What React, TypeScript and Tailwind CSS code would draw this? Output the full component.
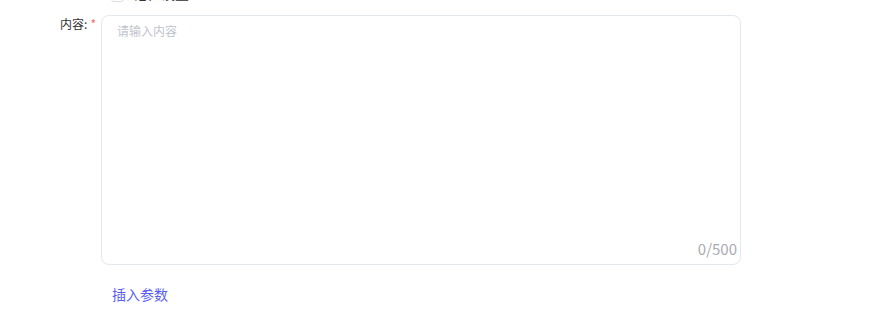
import React from "react";

export default function App() {
  return (
    <div
      className="w-[869px] h-[332px] bg-white overflow-hidden relative"
      style={{ fontFamily: '"Noto Sans CJK SC", "Noto Sans", sans-serif' }}
    >
      <div className="flex items-center h-[20px] mt-[-17px] pl-[111px]">
        <span className="w-[13px] h-[13px] mt-[4px] border border-[#dcdfe6] rounded-[3px] bg-white" />
        <span className="ml-[9px] text-[14px] leading-[20px] text-[#303133]">记住设置</span>
      </div>
      <div className="flex mt-[12px]">
        <div className="w-[96px] shrink-0 flex justify-end pt-[0px] text-[12px] leading-[18px] text-[#303133]">
          <span>内容:</span>
          <span className="ml-[3px] text-[#f56c6c]">*</span>
        </div>
        <div className="ml-[5px] w-[640px] h-[250px] border border-[#e4e7ed] rounded-[8px] relative">
          <div className="pl-[15px] pt-[5px] text-[12px] leading-[20px] text-[#c0c4cc]">请输入内容</div>
          <div className="absolute right-[3px] bottom-[5px] text-[15px] leading-[20px] text-[#a8abb2]">0/500</div>
        </div>
      </div>
      <div className="pl-[112px] mt-[19px] text-[14px] leading-[20px] text-[#5b5ef4]">插入参数</div>
    </div>
  );
}
